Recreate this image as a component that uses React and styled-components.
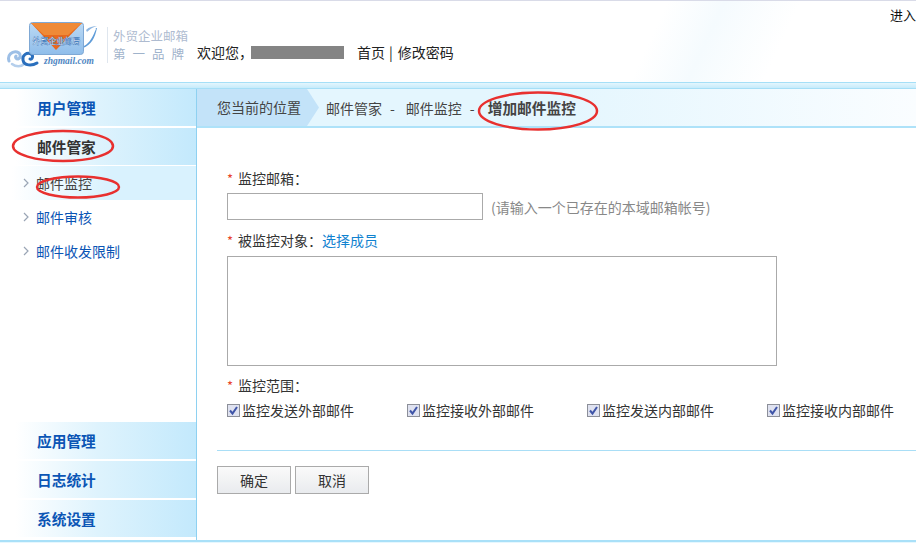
import React from 'react';
import styled, { createGlobalStyle } from 'styled-components';

const GlobalStyle = createGlobalStyle`
  html, body {
    margin: 0;
    padding: 0;
    background: #fff;
    overflow: hidden;
  }
  body {
    font-family: "Noto Sans CJK SC", "Liberation Sans", sans-serif;
    font-size: 14px;
    color: #333;
  }
`;

const Page = styled.div`
  position: relative;
  width: 916px;
  height: 543px;
  display: flex;
  flex-direction: column;
  overflow: hidden;
`;

const Header = styled.header`
  height: 81px;
  flex: none;
  border-top: 1px solid #d9dbe8;
  background: linear-gradient(115deg, #fff 70%, #f5fbfe 76%, #fff 84%);
  display: flex;
  align-items: flex-start;
  justify-content: space-between;
`;

const Brand = styled.div`
  display: flex;
  align-items: flex-start;
  padding-top: 20px;
  padding-left: 6px;
`;

const LogoImage = styled.svg`
  flex: none;
  margin-right: 6px;
`;

const LogoText = styled.div`
  width: 81px;
  height: 36px;
  margin-top: 6px;
  padding-left: 5px;
  border-left: 1px solid #dfe6ee;
  font-size: 12.5px;
  line-height: 18px;
  white-space: nowrap;
`;

const Slogan = styled.div`
  letter-spacing: ${props => props.$spacing}px;
  color: ${props => props.$color};
`;

const Welcome = styled.div`
  display: flex;
  align-items: center;
  margin-top: 21px;
  margin-left: 3px;
  height: 20px;
  color: #222;
  white-space: nowrap;
`;

const Masked = styled.span`
  width: 93px;
  height: 13px;
  margin: 0 13px 0 -2px;
  background: #848484;
`;

const Sep = styled.span`
  margin: 0 5px 0 4px;
`;

const EnterLink = styled.div`
  margin-top: 5px;
  color: #111;
  font-size: 13px;
  line-height: 18px;
  white-space: nowrap;
`;

const Strip = styled.div`
  height: 5px;
  flex: none;
  border-top: 1px solid #a5dff7;
  border-bottom: 1px solid #a5dff7;
  background: linear-gradient(#e4f6fd, #c6ebfb);
`;

const Body = styled.div`
  height: 451px;
  flex: none;
  display: flex;
`;

const Sidebar = styled.aside`
  width: 196px;
  flex: none;
  padding-bottom: 1px;
  box-sizing: border-box;
  display: flex;
  flex-direction: column;
  justify-content: space-between;
`;

const MenuTitle = styled.div`
  height: 37px;
  margin-bottom: 2px;
  padding-left: 37px;
  line-height: 37px;
  font-size: 14.7px;
  font-weight: 700;
  color: ${props => (props.$active ? '#333' : '#0b55b5')};
  background: linear-gradient(90deg, #fff 8%, #def3fd 50%, #c3e9fc 100%);
`;

const SubList = styled.div`
  margin-top: -1px;
`;

const SubItem = styled.div`
  position: relative;
  height: 34px;
  padding-left: 36px;
  line-height: 34px;
  font-size: 14px;
  color: ${props => (props.$active ? '#444' : '#0b55b5')};
  background: ${props =>
    props.$active ? 'linear-gradient(90deg, #fff 6%, #d9f2fe 55%)' : 'transparent'};
`;

const Chevron = styled.svg`
  position: absolute;
  left: 23px;
  top: 12px;
`;

const Main = styled.main`
  flex: 1;
  min-width: 0;
  border-left: 1px solid #8ed1f1;
`;

const Crumbs = styled.nav`
  height: 37px;
  display: flex;
  align-items: center;
  border-bottom: 2px solid #aee2f9;
  background: linear-gradient(90deg, #e4f6fe 50%, #fafdff 100%);
  white-space: nowrap;
`;

const CrumbHead = styled.div`
  width: 123px;
  height: 37px;
  margin-right: 6px;
  padding-left: 20px;
  box-sizing: border-box;
  line-height: 37px;
  color: #444;
  background: #c3e3f9;
  clip-path: polygon(0 0, 110px 0, 122px 50%, 110px 100%, 0 100%);
`;

const Crumb = styled.span`
  color: #444;
  font-size: ${props => (props.$current ? '14.7px' : '14px')};
  font-weight: ${props => (props.$current ? 700 : 400)};
  margin-left: ${props => (props.$current ? '2px' : '0')};
`;

const CrumbDash = styled.span`
  margin: 0 11px 0 8px;
  color: #444;
`;

const Form = styled.form`
  padding: 40px 0 0 30px;
`;

const FieldLabel = styled.div`
  height: 20px;
  line-height: 20px;
  color: #333;
  white-space: nowrap;
`;

const Star = styled.span`
  color: #e8442a;
  margin-right: 5px;
  font-size: 13px;
`;

const InputRow = styled.div`
  display: flex;
  align-items: center;
  margin-top: 5px;
  margin-bottom: 10px;
`;

const TextInput = styled.div`
  width: 256px;
  height: 27px;
  box-sizing: border-box;
  border: 1px solid #aaa;
  background: #fff;
`;

const Hint = styled.span`
  margin-left: 8px;
  color: #888;
`;

const MemberLink = styled.span`
  color: #1082d0;
`;

const AreaBox = styled.div`
  width: 550px;
  height: 110px;
  box-sizing: border-box;
  margin: 6px 0 9px;
  border: 1px solid #aaa;
`;

const CheckRow = styled.div`
  display: grid;
  grid-template-columns: repeat(4, 180px);
  margin-top: 5px;
`;

const CheckItem = styled.label`
  display: flex;
  align-items: center;
  gap: 2px;
  height: 20px;
  color: #333;
  white-space: nowrap;
`;

const Box = styled.svg`
  flex: none;
`;

const Footer = styled.div`
  margin: 30px 0 0 -10px;
  padding-top: 15px;
  border-top: 1px solid #a9def6;
  display: flex;
  gap: 4px;
`;

const Button = styled.button`
  width: 74px;
  height: 28px;
  padding: 0;
  border: 1px solid #aaa;
  background: linear-gradient(#fafafa, #e9ebee);
  color: #333;
  font: inherit;
`;

const BottomStrip = styled.div`
  flex: 1;
  border-top: 2px solid #a9e0f8;
  background: #e6f7fe;
`;

const Annotations = styled.svg`
  position: absolute;
  left: 0;
  top: 0;
  pointer-events: none;
`;

const Logo = () => (
  <LogoImage width="95" height="50" viewBox="0 0 95 50">
    <defs>
      <linearGradient id="envelopeFill" x1="0" y1="0" x2="0" y2="1">
        <stop offset="0" stopColor="#bcdaf5" />
        <stop offset="1" stopColor="#8fbdea" />
      </linearGradient>
    </defs>
    <path d="M78 25c6-3 9-10 12-17-1-1 0-1 1-1-2 10-6 17-14 20z" fill="#5f9cd8" />
    <path d="M80 9c3-3 7-4 11-4-4 1-7 3-10 6z" fill="#8fb7e2" />
    <g fill="none" strokeLinecap="round">
      <path d="M3 40c-2-6 3-10 8-9 4 1 4 6 1 7-2 0-3-2-2-3" stroke="#9dbfe6" strokeWidth="3" />
      <path d="M6 43c4 3 9 3 12 0" stroke="#b5cfec" strokeWidth="2.5" />
      <path d="M31 42c-5 3-13 3-14-3-1-5 4-8 8-6 3 2 1 6-1 5" stroke="#2a6fbd" strokeWidth="3" />
    </g>
    <rect x="23.5" y="1.5" width="54" height="32" rx="3" fill="url(#envelopeFill)" stroke="#7fa8d4" />
    <path d="M25 2h51L50 29z" fill="#e8691e" />
    <path d="M25 2h51L62 14H38z" fill="#ef8a37" />
    <text x="50.5" y="23" textAnchor="middle" fontSize="8" fontWeight="700" fill="#fff" stroke="#2f6fb8" strokeWidth=".4">
      外贸企业邮局
    </text>
    <text x="38" y="43" fontSize="9.5" fontStyle="italic" fontWeight="700" fontFamily="Liberation Serif, serif" fill="#4f86c2">
      zhgmail.com
    </text>
  </LogoImage>
);

const Check = () => (
  <Box width="13" height="13" viewBox="0 0 13 13">
    <rect x=".5" y=".5" width="12" height="12" fill="#dfe2f0" stroke="#8c8f99" />
    <path d="M3 6.5l2.5 3L10 3" fill="none" stroke="#3f55a8" strokeWidth="2" />
  </Box>
);

const Arrow = () => (
  <Chevron width="6" height="10" viewBox="0 0 6 10">
    <path d="M1 1l4 4-4 4" fill="none" stroke="#9aa5b5" strokeWidth="1.2" />
  </Chevron>
);

const scopes = ['监控发送外部邮件', '监控接收外部邮件', '监控发送内部邮件', '监控接收内部邮件'];

export default function App() {
  return (
    <Page>
      <GlobalStyle />
      <Header>
        <Brand>
          <Logo />
          <LogoText>
            <Slogan $spacing={0} $color="#aebbd0">外贸企业邮箱</Slogan>
            <Slogan $spacing={7} $color="#9fb3cb">第一品牌</Slogan>
          </LogoText>
          <Welcome>
            欢迎您，
            <Masked />
            首页<Sep>|</Sep>修改密码
          </Welcome>
        </Brand>
        <EnterLink>进入</EnterLink>
      </Header>
      <Strip />
      <Body>
        <Sidebar>
          <div>
            <MenuTitle>用户管理</MenuTitle>
            <MenuTitle $active>邮件管家</MenuTitle>
            <SubList>
              <SubItem $active><Arrow />邮件监控</SubItem>
              <SubItem><Arrow />邮件审核</SubItem>
              <SubItem><Arrow />邮件收发限制</SubItem>
            </SubList>
          </div>
          <div>
            <MenuTitle>应用管理</MenuTitle>
            <MenuTitle>日志统计</MenuTitle>
            <MenuTitle>系统设置</MenuTitle>
          </div>
        </Sidebar>
        <Main>
          <Crumbs>
            <CrumbHead>您当前的位置</CrumbHead>
            <Crumb>邮件管家</Crumb>
            <CrumbDash>-</CrumbDash>
            <Crumb>邮件监控</Crumb>
            <CrumbDash>-</CrumbDash>
            <Crumb $current>增加邮件监控</Crumb>
          </Crumbs>
          <Form>
            <FieldLabel><Star>*</Star>监控邮箱：</FieldLabel>
            <InputRow>
              <TextInput />
              <Hint>(请输入一个已存在的本域邮箱帐号)</Hint>
            </InputRow>
            <FieldLabel>
              <Star>*</Star>被监控对象：<MemberLink>选择成员</MemberLink>
            </FieldLabel>
            <AreaBox />
            <FieldLabel><Star>*</Star>监控范围：</FieldLabel>
            <CheckRow>
              {scopes.map(scope => (
                <CheckItem key={scope}>
                  <Check />
                  {scope}
                </CheckItem>
              ))}
            </CheckRow>
            <Footer>
              <Button type="button">确定</Button>
              <Button type="button">取消</Button>
            </Footer>
          </Form>
        </Main>
      </Body>
      <BottomStrip />
      <Annotations width="916" height="543" viewBox="0 0 916 543">
        <g fill="none" stroke="#e8302f" strokeWidth="2.5">
          <ellipse cx="63" cy="146" rx="50" ry="15" />
          <ellipse cx="78" cy="187" rx="41" ry="10.5" />
          <ellipse cx="538" cy="111" rx="59" ry="18.5" />
        </g>
      </Annotations>
    </Page>
  );
}
